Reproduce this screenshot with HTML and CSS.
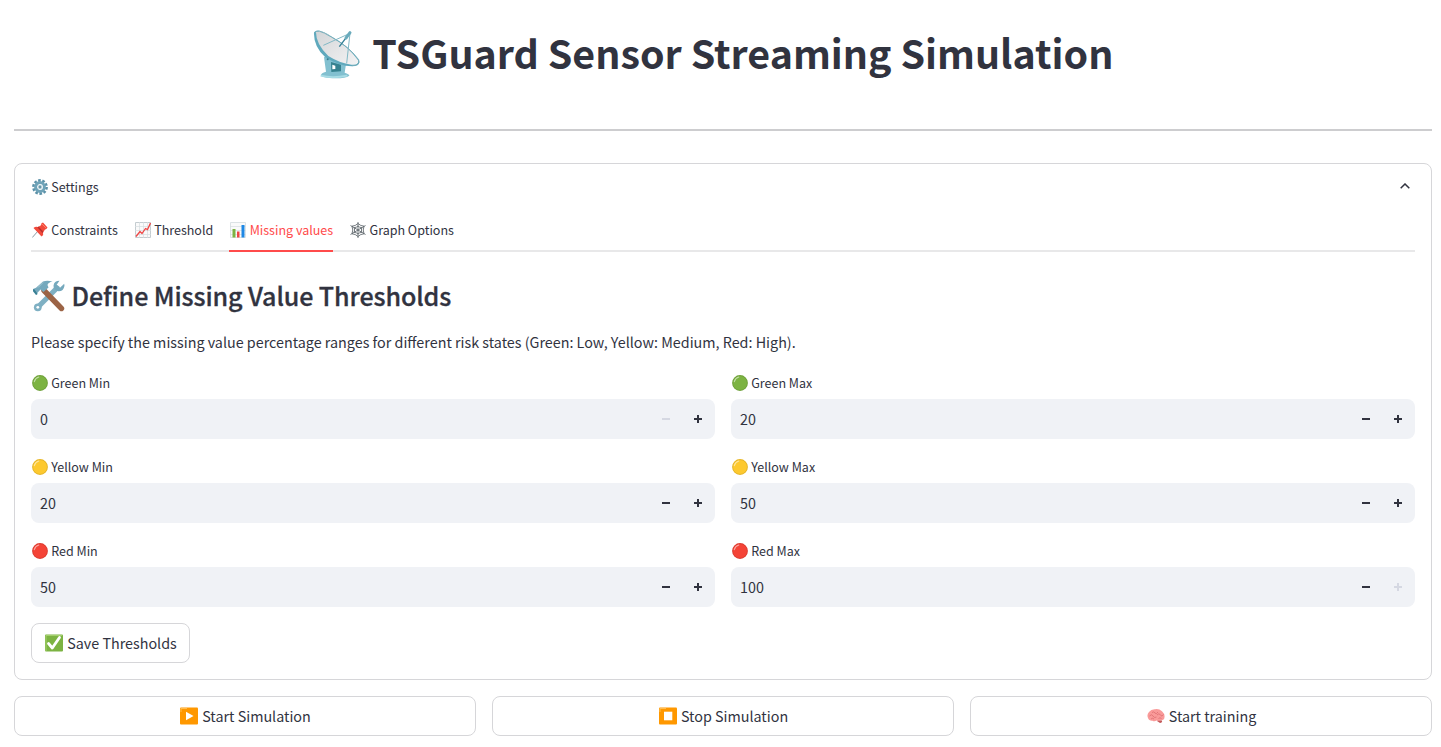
FILE: index.html
```html
<!DOCTYPE html>
<html lang="en">
<head>
<meta charset="utf-8">
<title>TSGuard Sensor Streaming Simulation</title>
<link rel="stylesheet" href="styles.css">
</head>
<body>
<svg class="defs" width="0" height="0" aria-hidden="true">
  <defs>
    <linearGradient id="dish" x1="0" y1="0" x2="1" y2="1"><stop offset="0" stop-color="#d3d5d7"/><stop offset="1" stop-color="#f3f3f4"/></linearGradient>
    <symbol id="minus" viewBox="0 0 8 8"><path d="M0 3h8v2H0z"/></symbol>
    <symbol id="plus" viewBox="0 0 8 8"><path d="M0 3h3V0h2v3h3v2H5v3H3V5H0z"/></symbol>
    <symbol id="ball" viewBox="0 0 16 16"><circle cx="8" cy="8" r="7.9"/><circle cx="8" cy="8" r="7.4" fill="none" stroke="#000" stroke-opacity=".1"/><path d="M2.3 6.6Q3.3 3 6.8 2" fill="none" stroke="#fff" stroke-opacity=".55" stroke-width="1.1" stroke-linecap="round"/></symbol>
  </defs>
</svg>
<main class="page">
  <h1 class="title">
    <svg class="title-icon" viewBox="39 27 144 150">
      <path d="M72 112l12-6 12 14 22 4 20 8-4 26q14 4 14 9-12 8-40 8-45-1-45-10 0-6 15-10z" fill="#82c0d0"/>
      <path d="M93 126l30 8v20l-29 2z" fill="#35818f"/><path d="M97 134l9 3v10l-9 1z" fill="#fff"/>
      <path d="M42 37q12-16 55 14 50 28 79 68 8 20-20 20-38 0-80-27-36-32-34-75z" fill="#5fa9bd"/>
      <path d="M48 35q18-9 54 21 46 26 72 65 4 15-20 13-34-4-69-26Q47 72 48 35z" fill="url(#dish)"/>
      <path d="M44 40q4-18 50 11 50 26 82 68 6 17-20 18" fill="none" stroke="#76aebb" stroke-width="3"/>
      <path d="M70 76l80-36-10 90" fill="none" stroke="#82b8c5" stroke-width="3"/>
      <path d="M118 80l32-42" stroke="#337f95" stroke-width="4"/><path d="M138 54l12-16" stroke="#6aabbc" stroke-width="9" stroke-linecap="round"/>
      <circle cx="83" cy="118" r="3" fill="#367d90"/><path d="M62 167q35 9 80 0" stroke="#a8dce5" stroke-width="5" fill="none"/>
    </svg>
    <span>TSGuard Sensor Streaming Simulation</span>
  </h1>
  <hr class="rule">
  <section class="panel">
    <header class="panel-head">
      <span class="label">
        <svg class="ico" viewBox="0 0 16 16"><circle cx="8" cy="8" r="6.6" fill="none" stroke="#5b91a8" stroke-width="2.6" stroke-dasharray="2.6 1.55"/><circle cx="8" cy="8" r="4.4" fill="none" stroke="#6fa3b8" stroke-width="3"/><circle cx="8" cy="8" r="2.2" fill="#c5dae3"/><circle cx="8" cy="8" r="1.4" fill="#6797a9"/></svg>
        <span>Settings</span>
      </span>
      <svg class="chevron" viewBox="0 0 10 6"><path d="M.7 5.3L5 1l4.300 4.300" fill="none" stroke="#31333f" stroke-width="1.5"/></svg>
    </header>
    <nav class="tabs">
      <a class="tab label">
        <svg class="ico" viewBox="0 0 16 16"><path d="M.3 15.500L6 9" stroke="#8b9ba3" stroke-width="1"/><path d="M1.500 6q2-2 4.500-1L9 3.200Q9 1 11 .6l4.500 5q-.8 2-2.500 1.800L11 10.500q1 2-1.500 4z" fill="#f1493b"/><path d="M6 5l5 5.500" stroke="#b92e2b" stroke-width="1.400"/><path d="M10 2l4 4" stroke="#ff8068"/></svg>
        <span>Constraints</span>
      </a>
      <a class="tab label">
        <svg class="ico" viewBox="0 0 16 16"><path d="M.5.5h15v15H.5z" fill="#fafafa" stroke="#c4ccd0"/><path d="M4.500 0v16M8.500 0v16M12.500 0v16M0 4.500h16M0 8.500h16M0 12.500h16" stroke="#d5dce0" stroke-width=".7"/><path d="M1 14.500l4-5 2 2 3.500-5 2 1L15.500 1" fill="none" stroke="#f04443" stroke-width="1.300"/></svg>
        <span>Threshold</span>
      </a>
      <a class="tab label active">
        <svg class="ico" viewBox="0 0 16 16"><path d="M.5.5h15v15H.5z" fill="#fafafa" stroke="#dce3e5"/><path d="M0 4.500h16M0 8.500h16M0 12.500h16" stroke="#d5dce0" stroke-width=".7"/><path d="M2.500 7h3v8.500h-3z" fill="#7cb342"/><path d="M7 9.500h2.500v6H7z" fill="#f04443"/><path d="M11.500 3h3v12.500h-3z" fill="#1e88e5"/></svg>
        <span>Missing values</span>
      </a>
      <a class="tab label">
        <svg class="ico" viewBox="0 0 16 16"><g fill="none" stroke="#525a61" stroke-width=".8"><path d="M8 0v16M.5 3.500l15 9M15.500 3.500l-15 9"/><path d="M8 1.500Q10.500 4 14 4.200 12.500 8 14 11.800 10.500 12 8 14.500 5.500 12 2 11.800 3.500 8 2 4.200 5.500 4 8 1.500z"/><path d="M8 4Q9.500 5.500 11.800 5.700 11 8 11.800 10.300 9.500 10.500 8 12 6.500 10.500 4.200 10.300 5 8 4.200 5.700 6.500 5.500 8 4z"/></g></svg>
        <span>Graph Options</span>
      </a>
    </nav>
    <h2 class="heading">
      <svg class="heading-icon" viewBox="0 0 32 32">
        <path d="M4.500 27.500L24 8" stroke="#7fb0c3" stroke-width="5.200" stroke-linecap="round"/><circle cx="4.800" cy="27.300" r="3.900" fill="#7fb0c3"/><circle cx="4.800" cy="27.300" r="1.400" fill="#fff"/>
        <path d="M26.500.8q-5.500 0-6 5 0 4.500 5 5.500 5 .2 6-5.500l-.3-2-4.200 4-3.300-3z" fill="#75a9bd"/>
        <path d="M11 10.500L28.500 28.500" stroke="#9c6446" stroke-width="5.400" stroke-linecap="round"/>
        <path d="M0 9l3-1.200L10 1.500Q14 0 19.500 1.500 15 2.500 14.500 5l1 2.500-5 4.500-3-2.500-3 3.300-1.500 2L0 11.500z" fill="#75a9bd"/><path d="M.3 9.500l3.600 5" stroke="#397f93" stroke-width="2"/><path d="M10 2.500L5 7.500" stroke="#a8cad5"/>
      </svg>
      <span>Define Missing Value Thresholds</span>
    </h2>
    <p class="intro">Please specify the missing value percentage ranges for different risk states (Green: Low, Yellow: Medium, Red: High).</p>
    <div class="grid">
      <div class="field"><div class="label"><svg class="ico green"><use href="#ball"/></svg><span>Green Min</span></div>
        <div class="input"><span>0</span><svg class="step off"><use href="#minus"/></svg><svg class="step"><use href="#plus"/></svg></div></div>
      <div class="field"><div class="label"><svg class="ico green"><use href="#ball"/></svg><span>Green Max</span></div>
        <div class="input"><span>20</span><svg class="step"><use href="#minus"/></svg><svg class="step"><use href="#plus"/></svg></div></div>
      <div class="field"><div class="label"><svg class="ico yellow"><use href="#ball"/></svg><span>Yellow Min</span></div>
        <div class="input"><span>20</span><svg class="step"><use href="#minus"/></svg><svg class="step"><use href="#plus"/></svg></div></div>
      <div class="field"><div class="label"><svg class="ico yellow"><use href="#ball"/></svg><span>Yellow Max</span></div>
        <div class="input"><span>50</span><svg class="step"><use href="#minus"/></svg><svg class="step"><use href="#plus"/></svg></div></div>
      <div class="field"><div class="label"><svg class="ico red"><use href="#ball"/></svg><span>Red Min</span></div>
        <div class="input"><span>50</span><svg class="step"><use href="#minus"/></svg><svg class="step"><use href="#plus"/></svg></div></div>
      <div class="field"><div class="label"><svg class="ico red"><use href="#ball"/></svg><span>Red Max</span></div>
        <div class="input"><span>100</span><svg class="step"><use href="#minus"/></svg><svg class="step off"><use href="#plus"/></svg></div></div>
    </div>
    <button class="btn save">
      <svg class="bico" viewBox="0 0 18 18"><rect y=".5" width="18" height="17" rx="1" fill="#7cb342"/><path d="M1 17V1.500h16" fill="none" stroke="#a4d06c"/><path d="M3.500 9.500l3.800 4.500L14.500 3.500" fill="none" stroke="#fff" stroke-width="2.800" stroke-linecap="round" stroke-linejoin="round"/></svg>
      <span>Save Thresholds</span>
    </button>
  </section>
  <div class="actions">
    <button class="btn">
      <svg class="bico" viewBox="0 0 18 18"><rect y=".5" width="18" height="17" rx="1" fill="#ff9800"/><path d="M1 5V1.500h6" fill="none" stroke="#ffbd52"/><path d="M6 4.700v8.600L13.500 9z" fill="#fff"/></svg>
      <span>Start Simulation</span>
    </button>
    <button class="btn">
      <svg class="bico" viewBox="0 0 18 18"><rect y=".5" width="18" height="17" rx="1" fill="#ff9800"/><path d="M1 5V1.500h6" fill="none" stroke="#ffbd52"/><path d="M5 4.700h8.300v8.600H5z" fill="#fff"/></svg>
      <span>Stop Simulation</span>
    </button>
    <button class="btn">
      <svg class="bico" viewBox="0 0 18 18"><path d="M11 13l4 .5q.5 2-2 2.500l-3-2z" fill="#c35b5b"/><path d="M1 11Q-.5 7.500 2 5 4 2 8 2.200q4-.7 7 2Q18 7 17.500 10q0 3.500-4 3.300-2 1-4 .2-2 1.500-4 .2Q2 14 1 11z" fill="#f99a99"/><path d="M2.500 9q2-2.500 3.500 0T9.500 10M5 5.500q2-1.500 3 .5t3-1M10 8q2-2.500 3.500 0t3-.5M4 12q1.500-1.500 3 0M11.500 11.500q1.500-1.500 3 0" fill="none" stroke="#dc6d70" stroke-width=".8"/></svg>
      <span>Start training</span>
    </button>
  </div>
</main>
</body>
</html>
```

FILE: styles.css
```css
* { box-sizing: border-box; }
body { margin: 0; background: #fff; color: #31333f; font-family: "Source Sans Pro", "Noto Sans CJK SC", "Noto Sans", sans-serif; font-size: 14.33px; height: 747px; overflow: hidden; }
svg { display: block; flex: none; }
.defs { position: absolute; }
.page { width: 1441px; padding: 0 9px 0 14px; }
.title { display: flex; align-items: center; gap: 11.3px; height: 52px; margin: 28px 0 0 299px; font-size: 39.38px; font-weight: 700; line-height: 52px; white-space: nowrap; }
.title span { padding-bottom: 4px; }
.title-icon { width: 48px; height: 50px; }
.rule { height: 2px; margin: 49px 0 32px; border: 0; background: #cdcdcf; }
.panel { height: 517px; padding: 0 16px; border: 1px solid #d6d6d9; border-radius: 8px; }
.panel-head { display: flex; align-items: center; justify-content: space-between; height: 46px; }
.label { display: flex; align-items: center; gap: 3.6px; font-size: 12.53px; line-height: 20px; white-space: nowrap; }
.ico { width: 16px; height: 16px; margin-left: .6px; }
.chevron { width: 10px; height: 6px; margin: -2px 5px 0 0; }
.tabs { display: flex; gap: 16.2px; height: 42px; border-bottom: 2px solid #e8e8e9; }
.tab { height: 42px; padding-bottom: 2px; }
.active { color: #ff4b4b; border-bottom: 2px solid #ff4b4b; padding-bottom: 0; }
.heading { display: flex; align-items: center; gap: 7px; height: 36px; margin: 26px 0 0 1.5px; font-size: 25.07px; font-weight: 500; line-height: 36px; letter-spacing: -.1px; white-space: nowrap; }
.heading span { padding-bottom: 2px; -webkit-text-stroke: .3px #31333f; }
.heading-icon { width: 32px; height: 32px; }
.intro { margin: 16px 0 17px; line-height: 24px; white-space: nowrap; }
.grid { display: grid; grid-template-columns: 1fr 1fr; gap: 16px; }
.field { height: 68px; padding-top: 2px; }
.field .label { height: 20px; margin-bottom: 6px; }
.input { display: flex; align-items: center; height: 40px; padding: 0 13px 0 9px; border-radius: 8px; background: #f0f2f6; }
.input span { flex: 1; padding-bottom: 2px; }
.step { width: 8px; height: 8px; margin-left: 24px; fill: #31333f; }
.off { fill: #d5d8e2; }
.green { fill: #7cb342; }
.yellow { fill: #fdc92f; }
.red { fill: #f44336; }
.btn { display: flex; align-items: center; justify-content: center; gap: 4px; height: 40px; padding: 0 0 0 1px; border: 1px solid #d6d6d9; border-radius: 8px; background: #fff; color: inherit; font: inherit; line-height: 24px; white-space: nowrap; }
.save { width: 159px; margin-top: 16px; }
.bico { width: 18px; height: 18px; }
.actions { display: grid; grid-template-columns: repeat(3, 1fr); gap: 16px; margin-top: 16px; }
```
